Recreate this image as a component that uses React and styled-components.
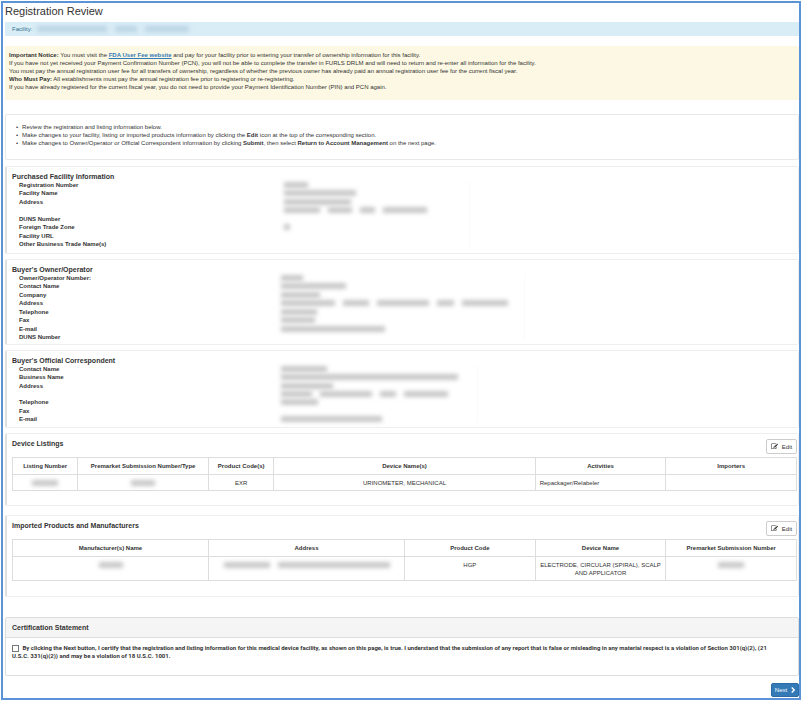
import React from "react";
import styled, { createGlobalStyle } from "styled-components";

const GlobalStyle = createGlobalStyle`
  *, *::before, *::after { box-sizing: border-box; }
  body {
    margin: 0;
    background: #fff;
    color: #333;
    font-family: "Liberation Sans", Arial, Helvetica, sans-serif;
    font-size: 6px;
    line-height: 8px;
  }
`;

const Frame = styled.main`
  margin: 1px 0 1px 1px;
  border: 2px solid #5b93d8;
  min-height: calc(100vh - 2px);
  padding: 2px 0 1px 2px;
  display: flex;
  flex-direction: column;
`;

const PageTitle = styled.h1`
  margin: 0;
  font-size: 11px;
  line-height: 13px;
  font-weight: 400;
`;

const FacilityBar = styled.div`
  display: flex;
  align-items: center;
  gap: 5px;
  margin-top: 4px;
  padding: 3px 7px;
  min-height: 14px;
  background: #d9edf7;
  color: #31708f;
`;

const Notice = styled.section`
  margin-top: 10px;
  padding: 5px 4px 9px;
  min-height: 54px;
  background: #fcf8e3;
  p { margin: 0; }
`;

const FeeLink = styled.a`
  color: #337ab7;
  font-weight: 700;
  text-decoration: underline;
`;

const Instructions = styled.section`
  margin-top: 14px;
  padding: 8px 0 12px;
  border: 1px solid #e8e8e8;
  border-radius: 2px;
  ul { margin: 0; padding-left: 10px; list-style: none; }
  li::before { content: "•"; margin-right: 4px; }
`;

const Section = styled.section`
  margin-top: ${(p) => p.$gap || 5}px;
  padding: 5px 1px 3px 5px;
  border: 1px solid #eee;
  border-left: 2px solid #e0e0e0;
  border-radius: 2px;
  min-height: ${(p) => p.$min}px;
`;

const SectionTitle = styled.h2`
  margin: 0;
  font-size: 7px;
  line-height: 9px;
  font-weight: 700;
`;

const Details = styled.dl`
  margin: 0 0 0 7px;
  display: grid;
  grid-template-columns: ${(p) => p.$labels}px 1fr;
  align-content: space-between;
  min-height: ${(p) => p.$min}px;
  width: ${(p) => p.$width}px;
  max-width: 100%;
  border-right: 1px solid #fafafa;
  dt { font-weight: 700; min-height: 8px; }
  dd { margin: 0; display: flex; align-items: center; }
`;

const Masked = styled.span`
  display: inline-flex;
  align-items: center;
  gap: 8px;
  filter: blur(2px);
  vertical-align: middle;
`;

const Smudge = styled.span`
  display: block;
  width: ${(p) => p.$w}px;
  height: 6px;
  background: ${(p) => p.$tone || "#c8c8c8"};
`;

const ListingHeader = styled.div`
  display: flex;
  justify-content: space-between;
  align-items: flex-start;
`;

const EditButton = styled.button`
  display: inline-flex;
  align-items: center;
  justify-content: center;
  gap: 4px;
  height: 15px;
  width: 31px;
  padding: 0;
  border: 1px solid #ccc;
  border-radius: 2px;
  background: #fff;
  color: #333;
  font: inherit;
  svg { width: 7px; height: 7px; }
`;

const DataTable = styled.table`
  width: 100%;
  margin-top: 3px;
  table-layout: fixed;
  border-collapse: collapse;
  th, td {
    border: 1px solid #ddd;
    padding: 4px;
    text-align: center;
    vertical-align: top;
  }
  td { padding: 4px 4px 3px; }
`;

const Column = styled.col`
  width: calc(100% * ${(p) => p.$span} / 12);
`;

const Cell = styled.td`
  && { text-align: ${(p) => p.$align || "center"}; }
`;

const Certification = styled.section`
  margin-top: 20px;
  border: 1px solid #ddd;
  border-radius: 2px;
`;

const CertificationHeader = styled.header`
  padding: 5px 6px;
  background: #f5f5f5;
  border-bottom: 1px solid #ddd;
`;

const Agreement = styled.label`
  display: block;
  padding: 6px 14px 15px 6px;
  font-family: Roboto, "Liberation Sans", Arial, sans-serif;
  font-weight: 700;
  input {
    appearance: none;
    width: 7px;
    height: 7px;
    margin: 0 2px 0 0;
    border: 1px solid #777;
    background: #fff;
    vertical-align: middle;
  }
  input:checked { background: #337ab7; }
`;

const Footer = styled.footer`
  display: flex;
  justify-content: flex-end;
  margin-top: 7px;
`;

const NextButton = styled.button`
  display: inline-flex;
  align-items: center;
  justify-content: center;
  gap: 4px;
  width: 28px;
  height: 14px;
  padding: 0;
  border: 1px solid #2e6da4;
  border-radius: 2px;
  background: #337ab7;
  color: #fff;
  font: inherit;
  svg { width: 4px; height: 6px; }
`;

const EditIcon = () => (
  <svg viewBox="0 0 1792 1792" fill="currentColor" aria-hidden="true">
    <path d="M888 1184l116-116-152-152-116 116v56h96v96h56zm440-720q-16-16-33 1l-350 350q-17 17-1 33t33-1l350-350q17-17 1-33zm80 594v190q0 119-84.5 203.5t-203.5 84.5h-832q-119 0-203.5-84.5t-84.5-203.5v-832q0-119 84.5-203.5t203.5-84.5h832q63 0 117 25 15 7 18 23 3 17-9 29l-49 49q-14 14-32 8-23-6-45-6h-832q-66 0-113 47t-47 113v832q0 66 47 113t113 47h832q66 0 113-47t47-113v-126q0-13 9-22l64-64q15-15 35-7t20 29zm-96-738l288 288-672 672h-288v-288zm444 132l-92 92-288-288 92-92q28-28 68-28t68 28l152 152q28 28 28 68t-28 68z" />
  </svg>
);

const ChevronIcon = () => (
  <svg viewBox="0 0 4 6" fill="none" stroke="currentColor" strokeWidth="1.4" aria-hidden="true">
    <path d="M0.7 0.5L3.2 3L0.7 5.5" />
  </svg>
);

const Hidden = ({ parts, tone }) => (
  <Masked aria-hidden="true">
    {parts.map((w, i) => <Smudge key={i} $w={w} $tone={tone} />)}
  </Masked>
);

const facility = [
  ["Registration Number", [24]],
  ["Facility Name", [72]],
  ["Address", [67]],
  ["", [36, 24, 15, 44]],
  ["DUNS Number"],
  ["Foreign Trade Zone", [6]],
  ["Facility URL"],
  ["Other Business Trade Name(s)"],
];

const owner = [
  ["Owner/Operator Number:", [22]],
  ["Contact Name", [65]],
  ["Company", [39]],
  ["Address", [54, 26, 52, 17, 46]],
  ["Telephone", [36]],
  ["Fax", [34]],
  ["E-mail", [104]],
  ["DUNS Number"],
];

const correspondent = [
  ["Contact Name", [46]],
  ["Business Name", [177]],
  ["Address", [52]],
  ["", [31, 52, 16, 44]],
  ["Telephone", [37]],
  ["Fax"],
  ["E-mail", [101]],
];

const DetailSection = ({ title, rows, min, listMin, width, gap, labels = 262 }) => (
  <Section $min={min} $gap={gap}>
    <SectionTitle>{title}</SectionTitle>
    <Details $min={listMin} $width={width} $labels={labels}>
      {rows.map(([label, parts], i) => (
        <React.Fragment key={i}>
          <dt>{label}</dt>
          <dd>{parts && <Hidden parts={parts} />}</dd>
        </React.Fragment>
      ))}
    </Details>
  </Section>
);

const ListingSection = ({ title, columns, children, min, gap }) => (
  <Section $min={min} $gap={gap}>
    <ListingHeader>
      <SectionTitle>{title}</SectionTitle>
      <EditButton type="button"><EditIcon />Edit</EditButton>
    </ListingHeader>
    <DataTable>
      <colgroup>
        {columns.map(([name, span]) => <Column key={name} $span={span} />)}
      </colgroup>
      <thead>
        <tr>{columns.map(([name]) => <th key={name} scope="col">{name}</th>)}</tr>
      </thead>
      <tbody>{children}</tbody>
    </DataTable>
  </Section>
);

const deviceColumns = [
  ["Listing Number", 1],
  ["Premarket Submission Number/Type", 2],
  ["Product Code(s)", 1],
  ["Device Name(s)", 4],
  ["Activities", 2],
  ["Importers", 2],
];

const importColumns = [
  ["Manufacturer(s) Name", 3],
  ["Address", 3],
  ["Product Code", 2],
  ["Device Name", 2],
  ["Premarket Submission Number", 2],
];

export default function App() {
  return (
    <>
      <GlobalStyle />
      <Frame>
        <PageTitle>Registration Review</PageTitle>
        <FacilityBar>
          <span>Facility:</span>
          <Hidden parts={[70, 22, 44]} tone="#bcd5e4" />
        </FacilityBar>
        <Notice>
          <p><b>Important Notice:</b> You must visit the <FeeLink href="#fee">FDA User Fee website</FeeLink> and pay for your facility prior to entering your transfer of ownership information for this facility.</p>
          <p>If you have not yet received your Payment Confirmation Number (PCN), you will not be able to complete the transfer in FURLS DRLM and will need to return and re-enter all information for the facility.</p>
          <p>You must pay the annual registration user fee for all transfers of ownership, regardless of whether the previous owner has already paid an annual registration user fee for the current fiscal year.</p>
          <p><b>Who Must Pay:</b> All establishments must pay the annual registration fee prior to registering or re-registering.</p>
          <p>If you have already registered for the current fiscal year, you do not need to provide your Payment Identification Number (PIN) and PCN again.</p>
        </Notice>
        <Instructions>
          <ul>
            <li>Review the registration and listing information below.</li>
            <li>Make changes to your facility, listing or imported products information by clicking the <b>Edit</b> icon at the top of the corresponding section.</li>
            <li>Make changes to Owner/Operator or Official Correspondent information by clicking <b>Submit</b>, then select <b>Return to Account Management</b> on the next page.</li>
          </ul>
        </Instructions>
        <DetailSection title="Purchased Facility Information" rows={facility} gap={6} min={88} listMin={67} width={451} labels={265} />
        <DetailSection title="Buyer's Owner/Operator" rows={owner} min={86} listMin={67} width={506} />
        <DetailSection title="Buyer's Official Correspondent" rows={correspondent} min={78} listMin={58} width={459} />
        <ListingSection title="Device Listings" columns={deviceColumns} min={73}>
          <tr>
            <Cell><Hidden parts={[26]} /></Cell>
            <Cell><Hidden parts={[24]} /></Cell>
            <Cell>EXR</Cell>
            <Cell>URINOMETER, MECHANICAL</Cell>
            <Cell $align="left">Repackager/Relabeler</Cell>
            <Cell />
          </tr>
        </ListingSection>
        <ListingSection title="Imported Products and Manufacturers" columns={importColumns} gap={9} min={82}>
          <tr>
            <Cell><Hidden parts={[24]} /></Cell>
            <Cell><Hidden parts={[46, 112]} /></Cell>
            <Cell>HGP</Cell>
            <Cell>ELECTRODE, CIRCULAR (SPIRAL), SCALP AND APPLICATOR</Cell>
            <Cell><Hidden parts={[26]} /></Cell>
          </tr>
        </ListingSection>
        <Certification>
          <CertificationHeader><SectionTitle>Certification Statement</SectionTitle></CertificationHeader>
          <Agreement>
            <input type="checkbox" /> By clicking the Next button, I certify that the registration and listing information for this medical device facility, as shown on this page, is true. I understand that the submission of any report that is false or misleading in any material respect is a violation of Section 301(q)(2), (21 U.S.C. 331(q)(2)) and may be a violation of 18 U.S.C. 1001.
          </Agreement>
        </Certification>
        <Footer>
          <NextButton type="button">Next<ChevronIcon /></NextButton>
        </Footer>
      </Frame>
    </>
  );
}
